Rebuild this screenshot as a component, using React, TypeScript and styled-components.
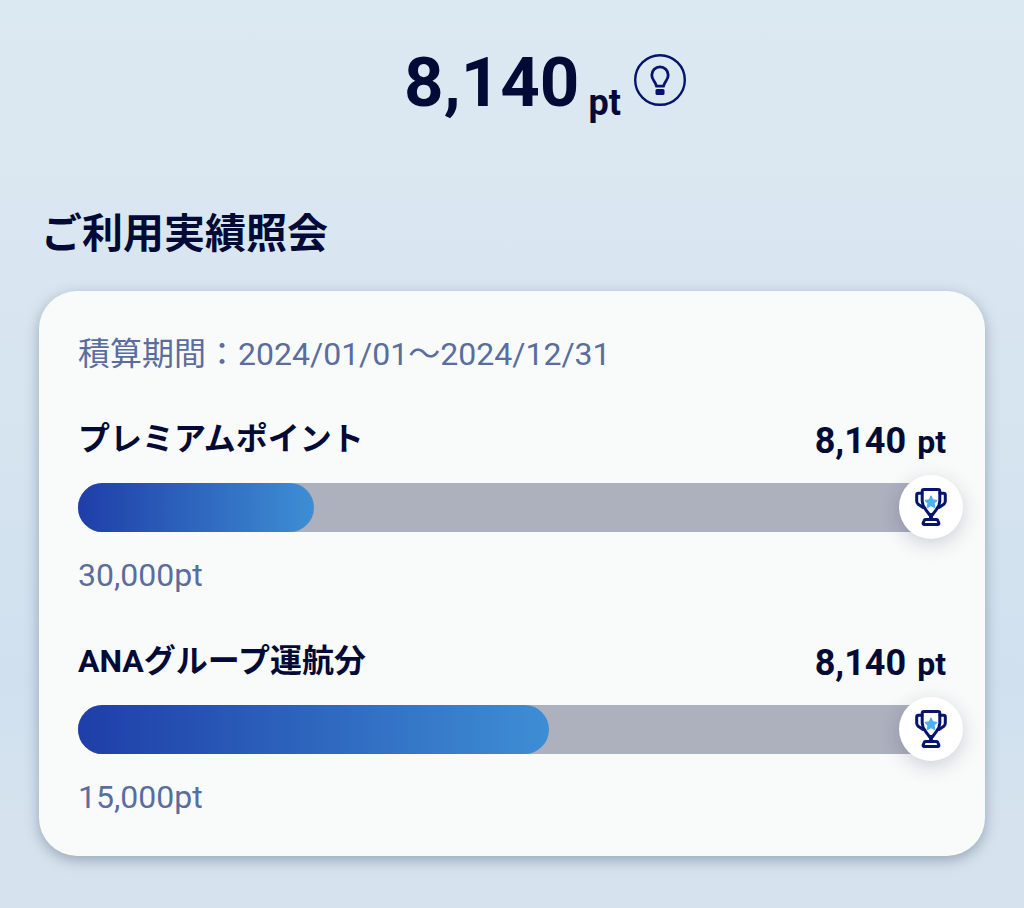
import React from "react";
import styled, { createGlobalStyle } from "styled-components";

const navy = "#020a35";
const iconNavy = "#05146c";
const slate = "#596d9f";

const GlobalStyle = createGlobalStyle`
  *, *::before, *::after { box-sizing: border-box; }
  body {
    margin: 0;
    color: ${navy};
    font-family: Roboto, "Noto Sans CJK JP", sans-serif;
  }
`;

const Page = styled.main`
  min-height: 100vh;
  padding: 41px 39px 52px;
  background: linear-gradient(180deg, #dbe9f2 0%, #dae7f1 20%, #d7e5f0 40%, #d0e0ee 75%, #d6e3ef 92%);
`;

const Summary = styled.header`
  display: flex;
  justify-content: center;
  padding-left: 66px;
  gap: 13px;
`;

const Total = styled.p`
  display: flex;
  align-items: flex-end;
  gap: 9px;
  margin: 0;
  font-size: 69px;
  font-weight: 700;
  line-height: 84px;
`;

const TotalUnit = styled.span`
  font-size: 36px;
  line-height: 44px;
`;

const HintButton = styled.button`
  display: block;
  align-self: flex-start;
  width: 52px;
  height: 52px;
  margin: 13px 0 0;
  padding: 0;
  border: 0;
  background: none;
  svg { display: block; }
`;

const Heading = styled.h1`
  margin: 79px 0 27px;
  padding-left: 2px;
  font-size: 41px;
  font-weight: 700;
  line-height: 60px;
`;

const Card = styled.section`
  padding: 39px 39px 34px;
  border-radius: 38px;
  background: #f9fbfa;
  box-shadow: 0 4px 14px rgba(60, 80, 100, 0.42);
`;

const Period = styled.p`
  margin: 0;
  color: ${slate};
  font-size: 32px;
  line-height: 48px;
`;

const Item = styled.div`
  margin-top: 37px;
`;

const ItemHead = styled.div`
  display: flex;
  align-items: flex-start;
  justify-content: space-between;
`;

const ItemTitle = styled.h2`
  margin: 0;
  font-size: 32px;
  font-weight: 700;
  line-height: 48px;
`;

const Points = styled.p`
  display: flex;
  align-items: baseline;
  gap: 11px;
  margin: 0;
  font-size: 36px;
  font-weight: 700;
  line-height: 52px;
`;

const PointsUnit = styled.span`
  font-size: 32px;
  line-height: 36px;
`;

const Track = styled.div`
  position: relative;
  height: 49px;
  margin-top: 16px;
  border-radius: 25px;
  background: #adb0bd;
`;

const Fill = styled.div`
  height: 100%;
  border-radius: 25px;
  background: linear-gradient(90deg, #1e3ea8, #3e8ed4);
`;

const Goal = styled.div`
  position: absolute;
  top: -8px;
  right: -17px;
  display: grid;
  place-items: center;
  width: 64px;
  height: 64px;
  border-radius: 50%;
  background: #fff;
  box-shadow: 0 5px 20px rgba(30, 30, 80, 0.2);
`;

const Target = styled.p`
  margin: 19px 0 0;
  padding-bottom: 1px;
  color: ${slate};
  font-size: 32px;
  line-height: 48px;
`;

const BulbIcon = () => (
  <svg width="52" height="52" viewBox="0 0 52 52" fill="none" aria-hidden="true">
    <circle cx="26" cy="26" r="24.8" stroke={iconNavy} strokeWidth="2.4" />
    <path
      d="M22.500 32.200c-.3-1.800-1.300-3.400-2.500-5.200-1.200-1.700-2.200-3.600-2.200-6a8.200 8.200 0 0 1 16.400 0c0 2.400-1 4.300-2.200 6-1.200 1.800-2.200 3.400-2.500 5.200z"
      stroke={iconNavy}
      strokeWidth="2.800"
      strokeLinejoin="round"
    />
    <rect x="21.500" y="35" width="9" height="6" rx="1.500" fill={iconNavy} />
  </svg>
);

const TrophyIcon = () => (
  <svg width="32" height="38" viewBox="0 0 32 38" fill="none" aria-hidden="true">
    <g stroke={iconNavy} strokeWidth="3" strokeLinejoin="round" strokeLinecap="round">
      <path d="M7.200 3.200q0-1.700 1.700-1.700h14.200q1.700 0 1.700 1.700V13c0 3.500-1.300 5.800-3.300 8.300l-3 4q-1 1.500-2.500 1.500t-2.500-1.500l-3-4C8.500 18.800 7.200 16.500 7.200 13z" />
      <path d="M7 5.200H3.500Q1.700 5.200 1.700 7V13q0 2 1.500 3.300l4.800 3.200M25 5.200h3.500q1.800 0 1.800 1.800V13q0 2-1.500 3.300l-4.800 3.200" />
      <path d="M10.500 31.500h11q1 0 1.300 1l1 2.300q.5 1.700-1 1.700h-13.600q-1.500 0-1-1.700l1-2.300q.3-1 1.300-1z" />
    </g>
    <path d="M12 25h8l-2 3.500v3h-4v-3z" fill={iconNavy} />
    <path
      d="M16 7.800l1.900 4 4.300.6-3.100 3 .8 4.400-3.900-2.100-3.900 2.100.8-4.400-3.100-3 4.300-.6z"
      fill="#4bb0ee"
      stroke="#4bb0ee"
      strokeLinejoin="round"
    />
  </svg>
);

const points = 8140;

const goals = [
  { title: "プレミアムポイント", target: 30000 },
  { title: "ANAグループ運航分", target: 15000 },
];

const format = (value: number) => value.toLocaleString("en-US");

const GoalProgress = ({ title, target }: { title: string; target: number }) => (
  <Item>
    <ItemHead>
      <ItemTitle>{title}</ItemTitle>
      <Points>
        {format(points)}
        <PointsUnit>pt</PointsUnit>
      </Points>
    </ItemHead>
    <Track
      role="progressbar"
      aria-label={title}
      aria-valuemin={0}
      aria-valuenow={points}
      aria-valuemax={target}
    >
      <Fill style={{ width: `${(points / target) * 100}%` }} />
      <Goal>
        <TrophyIcon />
      </Goal>
    </Track>
    <Target>{format(target)}pt</Target>
  </Item>
);

export default function App() {
  return (
    <>
      <GlobalStyle />
      <Page>
        <Summary>
          <Total>
            {format(points)}
            <TotalUnit>pt</TotalUnit>
          </Total>
          <HintButton type="button" aria-label="ヒント">
            <BulbIcon />
          </HintButton>
        </Summary>
        <Heading>ご利用実績照会</Heading>
        <Card>
          <Period>積算期間：2024/01/01〜2024/12/31</Period>
          {goals.map((goal) => (
            <GoalProgress key={goal.title} {...goal} />
          ))}
        </Card>
      </Page>
    </>
  );
}
